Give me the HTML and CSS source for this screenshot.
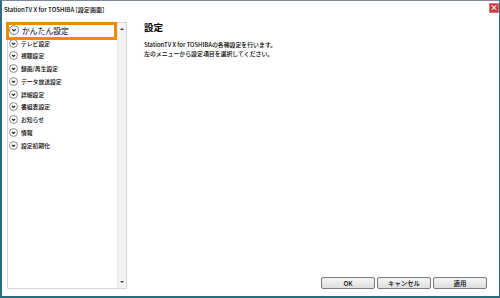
FILE: index.html
```html
<!DOCTYPE html>
<html lang="ja">
<head>
  <meta charset="UTF-8">
  <title>StationTV X for TOSHIBA [設定画面]</title>
  <link rel="stylesheet" href="styles.css">
</head>
<body>
  <div class="window">
    <div class="titlebar">
      <span class="title">StationTV X for TOSHIBA [設定画面]</span>
      <span class="close">×</span>
    </div>

    <div class="content">
      <!-- Menu list -->
      <div class="list">
        <div class="mark"></div>
        <ul class="items">
          <li class="item big"><svg class="ico" viewBox="0 0 10 10"><circle cx="5" cy="5" r="4.4"/><path d="M3.2 4.2 5 6 6.8 4.2"/></svg>かんたん設定</li>
          <li class="item"><svg class="ico" viewBox="0 0 10 10"><circle cx="5" cy="5" r="4.4"/><path d="M3.2 4.2 5 6 6.8 4.2"/></svg>テレビ設定</li>
          <li class="item"><svg class="ico" viewBox="0 0 10 10"><circle cx="5" cy="5" r="4.4"/><path d="M3.2 4.2 5 6 6.8 4.2"/></svg>視聴設定</li>
          <li class="item"><svg class="ico" viewBox="0 0 10 10"><circle cx="5" cy="5" r="4.4"/><path d="M3.2 4.2 5 6 6.8 4.2"/></svg>録画/再生設定</li>
          <li class="item"><svg class="ico" viewBox="0 0 10 10"><circle cx="5" cy="5" r="4.4"/><path d="M3.2 4.2 5 6 6.8 4.2"/></svg>データ放送設定</li>
          <li class="item"><svg class="ico" viewBox="0 0 10 10"><circle cx="5" cy="5" r="4.4"/><path d="M3.2 4.2 5 6 6.8 4.2"/></svg>詳細設定</li>
          <li class="item"><svg class="ico" viewBox="0 0 10 10"><circle cx="5" cy="5" r="4.4"/><path d="M3.2 4.2 5 6 6.8 4.2"/></svg>番組表設定</li>
          <li class="item"><svg class="ico" viewBox="0 0 10 10"><circle cx="5" cy="5" r="4.4"/><path d="M3.2 4.2 5 6 6.8 4.2"/></svg>お知らせ</li>
          <li class="item"><svg class="ico" viewBox="0 0 10 10"><circle cx="5" cy="5" r="4.4"/><path d="M3.2 4.2 5 6 6.8 4.2"/></svg>情報</li>
          <li class="item"><svg class="ico" viewBox="0 0 10 10"><circle cx="5" cy="5" r="4.4"/><path d="M3.2 4.2 5 6 6.8 4.2"/></svg>設定初期化</li>
        </ul>
        <div class="scroll">
          <span class="arrow up"></span>
          <span class="arrow down"></span>
        </div>
      </div>

      <!-- Settings panel -->
      <div class="panel">
        <h1>設定</h1>
        <p>StationTV X for TOSHIBAの各種設定を行います。<br>左のメニューから設定項目を選択してください。</p>
        <div class="buttons">
          <button>OK</button>
          <button>キャンセル</button>
          <button>適用</button>
        </div>
      </div>
    </div>
  </div>
</body>
</html>
```

FILE: styles.css
```css
:root {
  --frame: #2b6b86;
  --orange: #f08a00;
  --line: #d6d6d6;
  --text: #000;
}
* { margin: 0; padding: 0; box-sizing: border-box; }
body {
  background: #fff;
  color: var(--text);
  font-family: "Noto Sans CJK JP", "Noto Sans", sans-serif;
}
.window {
  width: 500px;
  height: 298px;
  display: flex;
  flex-direction: column;
  border-top: 1px solid #7d8b98;
  border-left: 2px solid var(--frame);
  border-right: 1px solid var(--frame);
  border-bottom: 2px solid var(--frame);
}
.titlebar {
  height: 16px;
  display: flex;
  align-items: center;
  justify-content: space-between;
  padding: 0 0 0 2px;
}
.title { font-size: 6.1px; font-weight: 500; }
.close {
  width: 10px;
  height: 10px;
  margin-top: -2px;
  background: #c83a3a;
  border: 1px solid #e07a7a;
  color: #fff;
  font-size: 8px;
  line-height: 7px;
  text-align: center;
  font-weight: bold;
}
.content {
  flex: 1;
  display: flex;
  padding: 5px 0 7px 5px;
}

/* left list */
.list {
  position: relative;
  width: 120px;
  display: flex;
  border: 1px solid var(--line);
}
.items {
  flex: 1;
  list-style: none;
  padding-top: 1px;
}
.item {
  height: 12.75px;
  display: flex;
  align-items: center;
  gap: 3px;
  padding-left: 1px;
  font-size: 5.8px;
  font-weight: 500;
}
.item.big { font-size: 7.8px; font-weight: 400; }
.ico {
  width: 9px;
  height: 9px;
  fill: #fff;
  stroke: #6f6f6f;
  stroke-width: 0.9;
}
.ico path { fill: none; stroke: #222; stroke-width: 1.2; }
.big .ico { width: 10px; height: 10px; }
.mark {
  position: absolute;
  left: -2px;
  top: -1px;
  width: 111px;
  height: 18px;
  border: 3px solid var(--orange);
}
.scroll {
  width: 9px;
  background: #f3f3f3;
  border-left: 1px solid #e6e6e6;
  display: flex;
  flex-direction: column;
  justify-content: space-between;
  align-items: center;
  padding: 5px 0 5px;
}
.arrow {
  width: 0;
  height: 0;
  border-left: 2px solid transparent;
  border-right: 2px solid transparent;
}
.arrow.up { border-bottom: 2px solid #444; }
.arrow.down { border-top: 2px solid #444; }

/* right panel */
.panel {
  flex: 1;
  display: flex;
  flex-direction: column;
  padding: 0 12px 0 17px;
}
h1 {
  font-size: 9.5px;
  line-height: 10px;
  font-weight: bold;
}
p {
  margin-top: 8px;
  font-size: 5.9px;
  line-height: 9px;
  font-weight: 500;
}
.buttons {
  margin-top: auto;
  display: flex;
  justify-content: flex-end;
  gap: 2px;
}
button {
  width: 54px;
  height: 12px;
  font-family: inherit;
  font-size: 6.4px;
  font-weight: 500;
  color: #000;
  border: 1px solid #7a7a7a;
  border-radius: 2px;
  background: linear-gradient(#f6f6f6, #dedede);
}
```
